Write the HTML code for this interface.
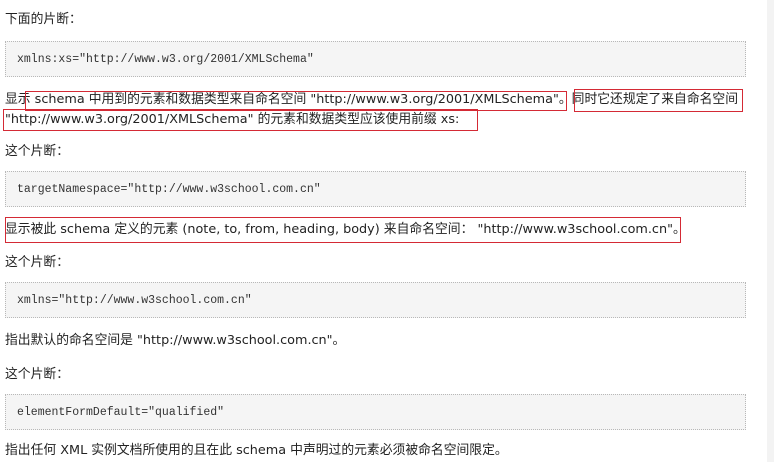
<!DOCTYPE html>
<html><head><meta charset="utf-8"><style>
body{margin:0;width:774px;height:462px;background:#fff;position:relative;overflow:hidden;font-family:"DejaVu Sans","Noto Sans CJK SC",sans-serif;font-size:12.8px;color:#222}
.t{position:absolute;left:5px;white-space:nowrap;line-height:16px}
.code{position:absolute;left:5px;width:741px;height:36px;background:#f5f5f5;border:1px dotted #b8b8b8;box-sizing:border-box}
.code span{position:absolute;left:11px;top:11px;font-family:"Liberation Mono",monospace;font-size:11.5px;color:#333}
.r{position:absolute;border:1.5px solid #d42a35;box-sizing:border-box}
.side{position:absolute;left:767px;top:0;width:7px;height:462px;background:#f3f3f3}
</style></head><body>
<div class="side"></div>
<div class="t" style="top:12px">下面的片断：</div>
<div class="code" style="top:41px"><span>xmlns:xs="http://www.w3.org/2001/XMLSchema"</span></div>
<div class="t" style="top:92px">显示 schema 中用到的元素和数据类型来自命名空间 "http://www.w3.org/2001/XMLSchema"。同时它还规定了来自命名空间</div>
<div class="t" style="top:112px">"http://www.w3.org/2001/XMLSchema" 的元素和数据类型应该使用前缀 xs:</div>
<div class="r" style="left:25px;top:91px;width:542px;height:20px"></div>
<div class="r" style="left:3px;top:109px;width:475px;height:22px"></div>
<div class="r" style="left:574px;top:89px;width:169px;height:23px"></div>
<div class="t" style="top:144px">这个片断：</div>
<div class="code" style="top:171px"><span>targetNamespace="http://www.w3school.com.cn"</span></div>
<div class="t" style="top:222px">显示被此 schema 定义的元素 (note, to, from, heading, body) 来自命名空间： "http://www.w3school.com.cn"。</div>
<div class="r" style="left:5px;top:217px;width:676px;height:26px"></div>
<div class="t" style="top:255px">这个片断：</div>
<div class="code" style="top:282px"><span>xmlns="http://www.w3school.com.cn"</span></div>
<div class="t" style="top:333px">指出默认的命名空间是 "http://www.w3school.com.cn"。</div>
<div class="t" style="top:367px">这个片断：</div>
<div class="code" style="top:394px"><span>elementFormDefault="qualified"</span></div>
<div class="t" style="top:443px">指出任何 XML 实例文档所使用的且在此 schema 中声明过的元素必须被命名空间限定。</div>
</body></html>
